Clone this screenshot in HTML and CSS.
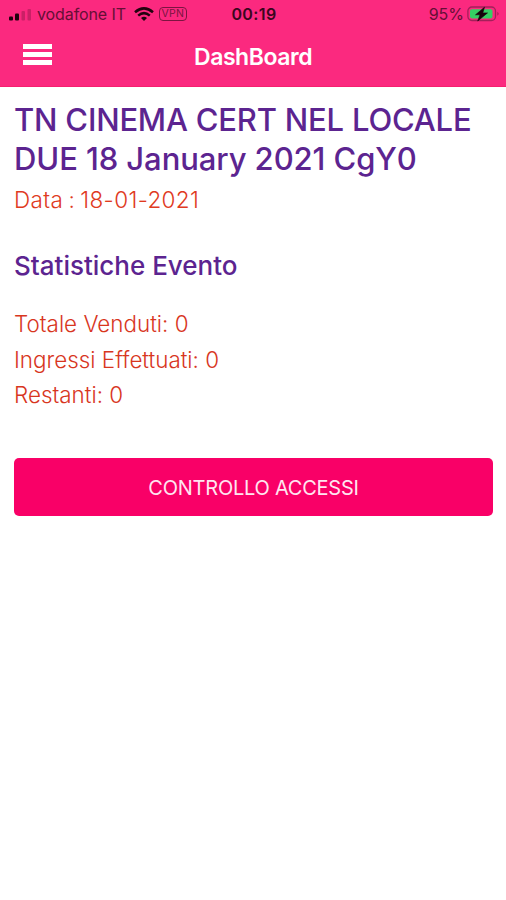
FILE: index.html
```
<!DOCTYPE html>
<html lang="it">
<head>
<meta charset="utf-8">
<title>DashBoard</title>
<link rel="stylesheet" href="styles.css">
</head>
<body>
<header class="header">
  <div class="status">
    <div class="status-left">
      <svg class="signal" width="22" height="13" viewBox="0 0 22 13"><rect x="0" y="8.5" width="4" height="4" rx="1"/><rect x="6" y="5.5" width="4" height="7" rx="1"/><g opacity=".22"><rect x="12.5" y="3" width="3.5" height="9.5" rx="1"/><rect x="18.5" y="1" width="3.5" height="11.5" rx="1"/></g></svg>
      <span class="carrier">vodafone IT</span>
      <svg class="wifi" width="20" height="14" viewBox="0 0 20 14" fill="none" stroke="#21030f" stroke-width="2.5"><path d="M1 5.2Q10-2.5 19 5.2M4.2 8.6Q10 3.7 15.8 8.6"/><path d="M7 11Q10 8.7 13 11L10 14Z" fill="#21030f" stroke="none"/></svg>
      <span class="vpn">VPN</span>
    </div>
    <span class="time">00:19</span>
    <div class="status-right">
      <span class="percent">95%</span>
      <svg class="battery" width="33" height="16" viewBox="0 0 33 16"><rect x=".9" y="1" width="27.6" height="13.5" rx="4" fill="none" stroke="#a3205a" stroke-width="1.3"/><rect x="3" y="3.2" width="22.5" height="9.2" rx="1.8" fill="#35cf63"/><path d="M30.5 5.8Q32.5 7.8 30.5 9.8Z" fill="#8b1748"/><path d="M17.5 1.2L8.5 8.8H13L10.7 15L20.5 6.9H15.8Z" fill="#18020b" stroke="#18020b" stroke-width=".6"/></svg>
    </div>
  </div>
  <nav class="nav">
    <button class="menu" aria-label="Menu"><i></i><i></i><i></i></button>
    <h1 class="nav-title">DashBoard</h1>
  </nav>
</header>
<main class="content">
  <h2 class="event"><span class="event-a">TN CINEMA CERT NEL LOCALE</span><br><span class="event-b">DUE 18 January 2021 CgY0</span></h2>
  <p class="date">Data : 18-01-2021</p>
  <h3 class="stats-title">Statistiche Evento</h3>
  <div class="stats">
    <p>Totale Venduti: 0</p>
    <p>Ingressi Effettuati: 0</p>
    <p>Restanti: 0</p>
  </div>
  <button class="action"><span>CONTROLLO ACCESSI</span></button>
</main>
</body>
</html>
```
FILE: styles.css
```
* { box-sizing: border-box; }
body, h1, h2, h3, p { margin: 0; }
body { background: #fff; font-family: Inter, "Liberation Sans", sans-serif; }
svg { display: block; flex: none; }
button { border: 0; padding: 0; font-family: inherit; }
.header { height: 87px; background: #fb297f; border-bottom: 1px solid #f5206f; }
.status { height: 28px; display: grid; grid-template-columns: 1fr auto 1fr; align-items: center; padding: 0 7px 0 9px; color: #650f36; }
.status-left, .status-right { display: flex; align-items: center; white-space: nowrap; }
.status-right { justify-content: flex-end; margin-right: -1px; }
.signal { fill: #21030f; }
.carrier { margin-left: 6px; font-size: 16px; letter-spacing: -.1px; }
.wifi { margin-left: 8px; }
.vpn { margin-left: 5px; width: 28px; height: 14px; border: 1px solid #7c1441; border-radius: 4px; font-size: 10.5px; line-height: 12px; text-align: center; letter-spacing: .3px; color: #7c1441; }
.time { font-size: 16px; font-weight: 600; letter-spacing: .4px; color: #3a061e; }
.percent { font-size: 16px; }
.battery { margin-left: 3px; }
.nav { height: 58px; display: grid; grid-template-columns: 52px 1fr 52px; align-items: center; }
.menu { display: flex; flex-direction: column; gap: 3px; width: 29px; margin-left: 23px; margin-bottom: 5px; background: none; }
.menu i { height: 5px; background: #fff; }
.nav-title { text-align: center; color: #fff; font-size: 23px; font-weight: 600; line-height: 28px; letter-spacing: -.45px; }
.content { padding: 14px 13px 0 14px; }
.event { color: #5c2490; font-size: 31px; font-weight: 500; line-height: 38.5px; white-space: nowrap; }
.event-a { letter-spacing: -.2px; }
.event-b { letter-spacing: -.08px; }
.date { margin-top: 8px; color: #e03a1e; font-size: 22.5px; font-weight: 300; line-height: 28px; letter-spacing: .36px; word-spacing: -1.5px; }
.stats-title { margin-top: 35px; color: #5c2490; font-size: 26px; font-weight: 500; line-height: 34px; }
.stats { margin-top: 23px; color: #d8361e; font-size: 22.4px; font-weight: 300; line-height: 35.7px; }
.action { display: block; width: 100%; height: 58px; margin-top: 45px; padding-top: 1px; background: #f90067; border-radius: 5px; color: #ffe5f0; font-size: 20px; letter-spacing: -.24px; }
```
